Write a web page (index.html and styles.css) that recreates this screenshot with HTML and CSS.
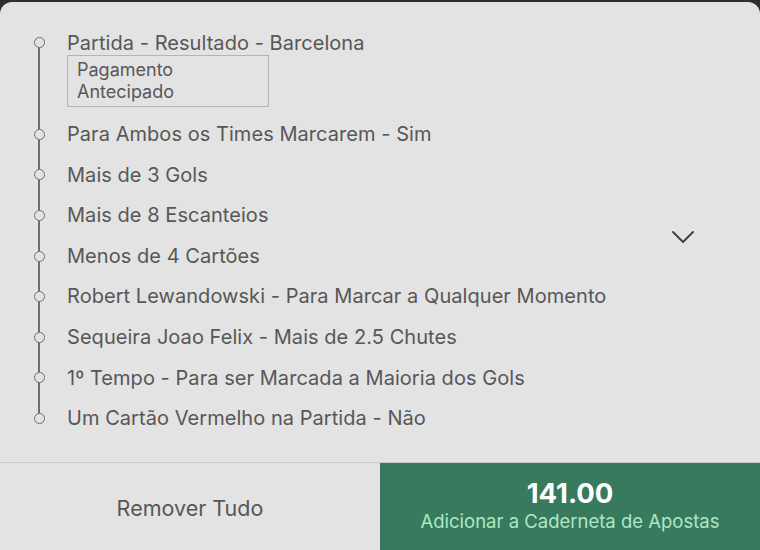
FILE: index.html
```
<!DOCTYPE html>
<html lang="pt">
<head>
<meta charset="utf-8">
<link rel="stylesheet" href="styles.css">
</head>
<body>
<div class="sheet">
  <div class="content">
    <ul class="timeline">
      <li class="row"><span class="dot"></span><div class="body"><div class="label">Partida - Resultado - Barcelona</div><div class="badge">Pagamento<br>Antecipado</div></div></li>
      <li class="row"><span class="dot"></span><div class="body"><div class="label">Para Ambos os Times Marcarem - Sim</div></div></li>
      <li class="row"><span class="dot"></span><div class="body"><div class="label">Mais de 3 Gols</div></div></li>
      <li class="row"><span class="dot"></span><div class="body"><div class="label">Mais de 8 Escanteios</div></div></li>
      <li class="row"><span class="dot"></span><div class="body"><div class="label">Menos de 4 Cartões</div></div></li>
      <li class="row"><span class="dot"></span><div class="body"><div class="label">Robert Lewandowski - Para Marcar a Qualquer Momento</div></div></li>
      <li class="row"><span class="dot"></span><div class="body"><div class="label">Sequeira Joao Felix - Mais de 2.5 Chutes</div></div></li>
      <li class="row"><span class="dot"></span><div class="body"><div class="label">1º Tempo - Para ser Marcada a Maioria dos Gols</div></div></li>
      <li class="row"><span class="dot"></span><div class="body"><div class="label">Um Cartão Vermelho na Partida - Não</div></div></li>
    </ul>
    <svg class="chevron" width="22" height="12" viewBox="0 0 22 12"><polyline points="1,1 11,11 21,1" fill="none" stroke="#3e3e3e" stroke-width="1.8" stroke-linecap="round" stroke-linejoin="round"/></svg>
  </div>
  <div class="footer">
    <button class="btn-remove">Remover Tudo</button>
    <button class="btn-add"><span class="price">141.00</span><span class="add-text">Adicionar a Caderneta de Apostas</span></button>
  </div>
</div>
</body>
</html>
```
FILE: styles.css
```
* { box-sizing: border-box; }
html, body { margin: 0; padding: 0; }
body {
  background: #2e2e2e;
  width: 760px;
  height: 550px;
  overflow: hidden;
  font-family: Inter, "Noto Sans", sans-serif;
}
.sheet {
  margin-top: 2px;
  height: 560px;
  background: #e3e3e3;
  border-radius: 12px;
  overflow: hidden;
  display: flex;
  flex-direction: column;
}
.content {
  height: 460px;
  display: flex;
  align-items: center;
  padding: 0 66px 0 33.5px;
}
.timeline {
  list-style: none;
  margin: 0;
  padding: 20.7px 0 0;
  align-self: flex-start;
  flex: 1;
  position: relative;
}
.timeline::before {
  content: "";
  position: absolute;
  left: 4.75px;
  top: 41px;
  bottom: 20px;
  width: 1.5px;
  background: #6e6e6e;
}
.row {
  display: flex;
  align-items: flex-start;
  padding: 8px 0;
}
.dot {
  width: 11px;
  height: 11px;
  margin-top: 6.8px;
  border: 1.5px solid #6e6e6e;
  border-radius: 50%;
  background: #e3e3e3;
  position: relative;
  flex: none;
}
.body { margin-left: 22.5px; }
.label {
  font-size: 20px;
  letter-spacing: 0.05px;
  line-height: 24.6px;
  color: #575757;
  white-space: nowrap;
}
.badge {
  width: 202px;
  height: 52px;
  margin-bottom: -1.3px;
  border: 1.5px solid #b4b4b4;
  padding: 3px 9px 0;
  font-size: 18px;
  line-height: 22px;
  color: #585858;
}
.chevron { flex: none; margin-top: 10px; }
.footer {
  height: 100px;
  display: flex;
  border-top: 1.5px solid #c9c9c9;
}
.footer button {
  border: 0;
  margin: 0;
  font-family: inherit;
  width: 380px;
  height: 100%;
  padding: 0;
  padding-bottom: 12px;
}
.btn-remove {
  background: #e3e3e3;
  color: #575757;
  font-size: 21.5px;
  padding-top: 2px !important;
}
.btn-add {
  background: #387a5e;
  display: flex;
  flex-direction: column;
  align-items: center;
  justify-content: center;
}
.price {
  color: #ffffff;
  font-size: 27.5px;
  font-weight: 700;
  line-height: 30px;
}
.add-text {
  color: #ace8c6;
  font-size: 18.5px;
  line-height: 27px;
}
```
